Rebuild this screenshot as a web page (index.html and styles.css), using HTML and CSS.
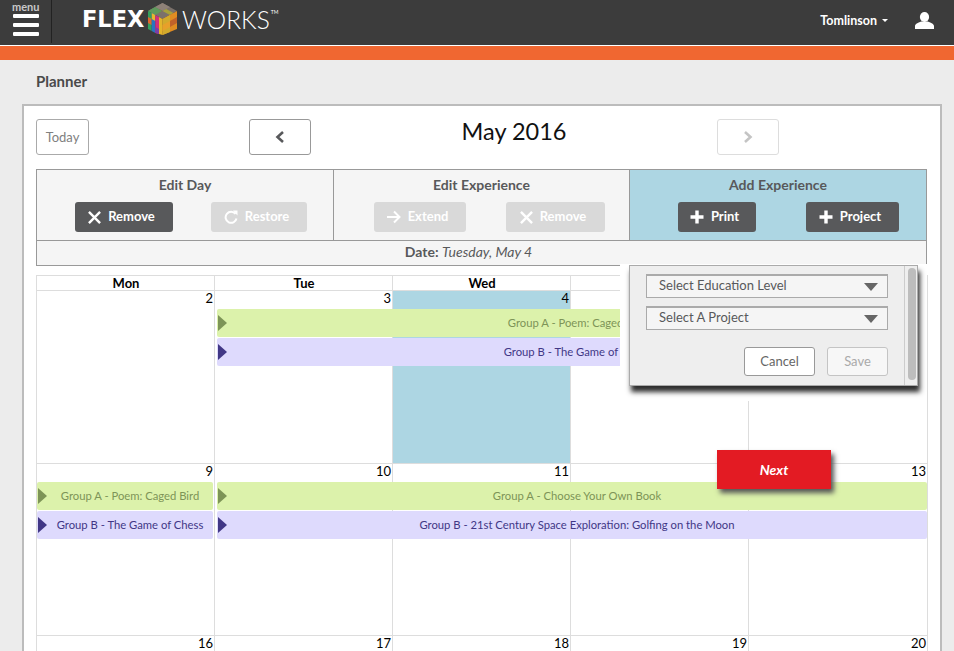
FILE: index.html
```html
<!DOCTYPE html>
<html>
  <head>
    <title>FlexWorks Planner</title>
    <link rel="stylesheet" href="styles.css">
  </head>
  <body>

    <header class="topbar">
      <div class="menu">
        <span class="menu-label">menu</span>
        <span class="menu-line"></span>
        <span class="menu-line"></span>
        <span class="menu-line"></span>
      </div>
      <div class="logo">
        <span class="logo-flex">FLEX</span>
        <svg class="cube" width="31" height="32" viewBox="0 0 31 32">
          <polygon points="15.5,0 30,8 15.5,16 1,8" fill="#7b716b"/>
          <polygon points="15.5,0 23,4 15.5,8 8,4" fill="#8f8178"/>
          <polygon points="11.7,6 15.5,8 11.7,10 8,8" fill="#b8453c"/>
          <polygon points="8,4 15.5,8 8,12 1,8" fill="#5f9a5c"/>
          <polygon points="19.2,6 26.5,10 23,12 15.5,8" fill="#a8a23a"/>
          <polygon points="1,8 4.7,10 4.7,28 1,26" fill="#35a05a"/>
          <polygon points="1,14 4.7,16 4.7,22 1,20" fill="#e2672c"/>
          <polygon points="4.7,10 8.3,12 8.3,30 4.7,28" fill="#2a75c0"/>
          <polygon points="4.7,10 8.3,12 8.3,18 4.7,16" fill="#e8b72e"/>
          <polygon points="8.3,12 12,14 12,31 8.3,30" fill="#d2307c"/>
          <polygon points="8.3,24 12,26 12,31 8.3,30" fill="#7b3fa8"/>
          <polygon points="12,14 15.5,16 15.5,32 12,31" fill="#e4b52a"/>
          <polygon points="15.5,16 30,8 30,26 15.5,32" fill="#e08c22"/>
          <polygon points="15.5,16 23,12 23,29 15.5,32" fill="#d2aa2c"/>
          <polygon points="23,18 30,14 30,20 23,24" fill="#c2622a"/>
          <polygon points="15.5,22 23,18 23,24 15.5,28" fill="#e8a02a"/>
        </svg>
        <span class="logo-works">WORKS</span>
        <span class="logo-tm">TM</span>
      </div>
      <div class="account">
        <span class="account-name">Tomlinson</span>
        <span class="caret"></span>
        <svg class="user" width="19" height="17" viewBox="0 0 19 17">
          <ellipse cx="9.5" cy="5" rx="4.6" ry="5" fill="#fff"/>
          <path d="M0 17 V14 C0 11.5 4 10.5 6 9.5 H13 C15 10.5 19 11.5 19 14 V17 Z" fill="#fff"/>
        </svg>
      </div>
    </header>
    <div class="stripe"></div>

    <main class="page">
      <h1 class="page-title">Planner</h1>

      <section class="card">
        <div class="month-nav">
          <button class="today">Today</button>
          <button class="arrow-btn">
            <svg width="10" height="12" viewBox="0 0 10 12"><path d="M8 1 L2.5 6 L8 11" fill="none" stroke="#58595b" stroke-width="2.6"/></svg>
          </button>
          <h2 class="month">May 2016</h2>
          <button class="arrow-btn off">
            <svg width="10" height="12" viewBox="0 0 10 12"><path d="M2 1 L7.5 6 L2 11" fill="none" stroke="#c4c4c4" stroke-width="2.6"/></svg>
          </button>
        </div>

        <div class="tools">
          <div class="tool-row">
            <div class="tool tool-day">
              <h3>Edit Day</h3>
              <div class="tool-btns">
                <button class="act w98">
                  <svg width="13" height="13" viewBox="0 0 14 14"><path d="M1 1 L13 13 M13 1 L1 13" stroke="#fff" stroke-width="2.6"/></svg>
                  <span>Remove</span>
                </button>
                <button class="act off w96">
                  <svg width="14" height="14" viewBox="0 0 14 14"><path d="M11.5 4 A5.5 5.5 0 1 0 12.5 8.5" fill="none" stroke="#fff" stroke-width="2"/><path d="M9 0.5 H13.5 V5.5 Z" fill="#fff"/></svg>
                  <span>Restore</span>
                </button>
              </div>
            </div>
            <div class="tool tool-exp">
              <h3>Edit Experience</h3>
              <div class="tool-btns">
                <button class="act off w92">
                  <svg width="14" height="14" viewBox="0 0 14 14"><path d="M0 7 H12 M7 1.5 L12.5 7 L7 12.5" fill="none" stroke="#fff" stroke-width="2"/></svg>
                  <span>Extend</span>
                </button>
                <button class="act off w99">
                  <svg width="13" height="13" viewBox="0 0 14 14"><path d="M1 1 L13 13 M13 1 L1 13" stroke="#fff" stroke-width="2.6"/></svg>
                  <span>Remove</span>
                </button>
              </div>
            </div>
            <div class="tool tool-add">
              <h3>Add Experience</h3>
              <div class="tool-btns">
                <button class="act w78">
                  <svg width="14" height="14" viewBox="0 0 14 14"><path d="M7 0.5 V13.5 M0.5 7 H13.5" stroke="#fff" stroke-width="3.4"/></svg>
                  <span>Print</span>
                </button>
                <button class="act w93">
                  <svg width="14" height="14" viewBox="0 0 14 14"><path d="M7 0.5 V13.5 M0.5 7 H13.5" stroke="#fff" stroke-width="3.4"/></svg>
                  <span>Project</span>
                </button>
              </div>
            </div>
          </div>
          <div class="date-row"><b>Date:</b> <i>Tuesday, May 4</i></div>
        </div>

        <div class="calendar">
          <div class="days">
            <div>Mon</div>
            <div>Tue</div>
            <div>Wed</div>
            <div></div>
            <div></div>
          </div>

          <div class="week week-first">
            <div class="cell c1">2</div>
            <div class="cell c2">3</div>
            <div class="cell c3 picked">4</div>
            <div class="cell c4"></div>
            <div class="cell c5"></div>
            <div class="bar green r1 from-tue"><span class="tri"></span><span class="bar-text">Group A - Poem: Caged Bird</span></div>
            <div class="bar purple r2 from-tue"><span class="tri"></span><span class="bar-text">Group B - The Game of Chess</span></div>
          </div>

          <div class="week">
            <div class="cell c1">9</div>
            <div class="cell c2">10</div>
            <div class="cell c3">11</div>
            <div class="cell c4"></div>
            <div class="cell c5">13</div>
            <div class="bar green r1 only-mon"><span class="tri"></span><span class="bar-text">Group A - Poem: Caged Bird</span></div>
            <div class="bar purple r2 only-mon"><span class="tri"></span><span class="bar-text">Group B - The Game of Chess</span></div>
            <div class="bar green r1 from-tue"><span class="tri"></span><span class="bar-text">Group A - Choose Your Own Book</span></div>
            <div class="bar purple r2 from-tue"><span class="tri"></span><span class="bar-text">Group B - 21st Century Space Exploration: Golfing on the Moon</span></div>
          </div>

          <div class="week">
            <div class="cell c1">16</div>
            <div class="cell c2">17</div>
            <div class="cell c3">18</div>
            <div class="cell c4">19</div>
            <div class="cell c5">20</div>
          </div>
        </div>

        <!-- the popup sits on a white patch that hides the calendar behind it -->
        <div class="popup-mask"></div>
        <div class="popup">
          <div class="popup-body">
            <div class="select">Select Education Level<span class="select-arrow"></span></div>
            <div class="select">Select A Project<span class="select-arrow"></span></div>
            <div class="popup-btns">
              <button class="pop-btn">Cancel</button>
              <button class="pop-btn off">Save</button>
            </div>
          </div>
          <div class="scroll"><div class="thumb"></div></div>
        </div>

        <button class="next">Next</button>
      </section>
    </main>

  </body>
</html>
```

FILE: styles.css
```css
*,
*:before,
*:after {
  box-sizing: border-box;
}
html,
body {
  margin: 0px;
  padding: 0px;
  height: 651px;
  overflow: hidden;
  background: #ececec;
  font-family: Lato, "Open Sans", sans-serif;
  color: #58595b;
}

button {
  font-family: inherit;
  padding: 0px;
}

/* top bar */
.topbar {
  display: flex;
  align-items: stretch;
  height: 46px;
  background: #3c3c3c;
  border-bottom: 1px solid #fff;
}
.menu {
  display: flex;
  flex-direction: column;
  align-items: center;
  width: 52px;
  margin-bottom: 2px;
  border-right: 1px solid #222;
}
.menu-label {
  width: 27px;
  margin-top: 1px;
  font-size: 11px;
  line-height: 11px;
  font-weight: bold;
  color: #c8c8c8;
  text-align: center;
}
.menu-line {
  width: 26px;
  height: 4px;
  margin-top: 2px;
  margin-bottom: 3px;
  border-radius: 1px;
  background: #fff;
}
.logo {
  display: flex;
  align-items: center;
  height: 38px;
  margin-left: 30px;
  color: #fff;
}
.logo-flex {
  width: 65px;
  font-family: "DejaVu Sans", sans-serif;
  font-size: 22.5px;
  font-weight: bold;
}
.logo-works {
  margin-left: 4px;
  font-size: 24.5px;
  font-weight: 300;
}
.logo-tm {
  align-self: flex-start;
  margin-top: 9px;
  margin-left: 1px;
  font-size: 5px;
}
.account {
  display: flex;
  align-items: center;
  margin-left: auto;
  padding-right: 20px;
  padding-bottom: 5px;
  color: #fff;
}
.account-name {
  font-size: 12.5px;
  font-weight: bold;
}
.caret {
  width: 0px;
  height: 0px;
  margin-left: 5px;
  border-top: 3px solid #fff;
  border-left: 3px solid transparent;
  border-right: 3px solid transparent;
}
.user {
  margin-left: 27px;
}
.stripe {
  height: 14px;
  background: #f06731;
}

/* page */
.page {
  padding: 0px 12px 0px 22px;
}
.page-title {
  height: 44px;
  margin: 0px;
  padding-top: 13px;
  padding-left: 14px;
  font-size: 15px;
  line-height: 16px;
  font-weight: bold;
  color: #4a4a4a;
}
.card {
  position: relative;
  height: 560px;
  padding: 13px 0px 0px 12px;
  background: #fff;
  border: 2px solid #bcbcbc;
}

.month-nav {
  display: flex;
  align-items: flex-start;
  height: 50px;
}
.today {
  width: 53px;
  height: 36px;
  margin-right: 160px;
  background: #fff;
  border: 1px solid #aaa;
  border-radius: 3px;
  font-size: 13px;
  color: #808080;
}
.arrow-btn {
  display: flex;
  align-items: center;
  justify-content: center;
  width: 62px;
  height: 36px;
  background: #fff;
  border: 1px solid #999;
  border-radius: 3px;
}
.arrow-btn.off {
  border-color: #ddd;
}
.month {
  width: 406px;
  margin: 0px;
  font-size: 23.5px;
  line-height: 24px;
  font-weight: normal;
  color: #111;
  text-align: center;
}

/* tool panels */
.tools {
  width: 891px;
  height: 97px;
  border: 1px solid #999;
}
.tool-row {
  display: flex;
  height: 71px;
  border-bottom: 1px solid #999;
}
.tool {
  width: 296px;
  background: #f5f5f5;
  border-right: 1px solid #999;
}
.tool h3 {
  height: 32px;
  margin: 0px;
  padding-top: 7px;
  font-size: 14px;
  line-height: 16px;
  font-weight: bold;
  text-align: center;
}
.tool-day {
  width: 297px;
}
.tool-add {
  border-right: 0px;
  background: #add6e3;
}
.tool-btns {
  display: flex;
}
.tool-day .tool-btns {
  gap: 38px;
  padding-left: 38px;
}
.tool-exp .tool-btns {
  gap: 40px;
  padding-left: 40px;
}
.tool-add .tool-btns {
  gap: 50px;
  padding-left: 48px;
}
.act {
  display: flex;
  align-items: center;
  justify-content: center;
  gap: 7px;
  height: 30px;
  padding-right: 5px;
  background: #58595b;
  border: 0px;
  border-radius: 3px;
  font-size: 13px;
  font-weight: bold;
  color: #fff;
}
.act span {
  margin-bottom: 2px;
}
.act.off {
  background: #d9d9d9;
}
.w98 { width: 98px; }
.w96 { width: 96px; }
.w92 { width: 92px; }
.w99 { width: 99px; }
.w78 { width: 78px; }
.w93 { width: 93px; }

.date-row {
  height: 24px;
  padding-right: 26px;
  background: #f5f5f5;
  font-size: 14px;
  line-height: 22px;
  text-align: center;
}

/* calendar */
.calendar {
  width: 892px;
  margin-top: 9px;
  border-right: 1px solid #ddd;
}
.days {
  display: grid;
  grid-template-columns: repeat(4, 178px) 179px;
  height: 16px;
  border-top: 1px solid #ddd;
  border-bottom: 1px solid #ddd;
}
.days div {
  padding-left: 1px;
  border-left: 1px solid #ddd;
  font-size: 13px;
  line-height: 14px;
  font-weight: bold;
  color: #000;
  text-align: center;
}
.week {
  display: grid;
  grid-template-columns: repeat(4, 178px) 179px;
  grid-template-rows: 17px 28px 28px 1fr;
  row-gap: 1px;
  height: 172px;
  border-bottom: 1px solid #ddd;
}
.week-first {
  height: 173px;
}
.cell {
  grid-row: 1 / -1;
  padding-right: 1px;
  border-left: 1px solid #ddd;
  font-size: 13px;
  line-height: 14px;
  color: #000;
  text-align: right;
}
.c1 { grid-column: 1; }
.c2 { grid-column: 2; }
.c3 { grid-column: 3; }
.c4 { grid-column: 4; }
.c5 { grid-column: 5; }
.picked {
  background: #add6e3;
}
.bar {
  display: flex;
  align-items: center;
  border-radius: 2px;
  font-size: 11.25px;
}
.r1 { grid-row: 2; }
.r2 { grid-row: 3; }
.from-tue {
  grid-column: 2 / 6;
  margin-left: 3px;
}
.only-mon {
  grid-column: 1;
  margin-left: 1px;
  margin-right: 1px;
}
.green {
  background: #dcf2ab;
  color: #7d9457;
}
.purple {
  background: #dedafd;
  color: #413786;
}
.tri {
  width: 0px;
  height: 0px;
  margin-left: 1px;
  border-left: 9px solid #7d9457;
  border-top: 8px solid transparent;
  border-bottom: 8px solid transparent;
}
.purple .tri {
  border-left-color: #413786;
}
.bar-text {
  flex: 1;
  padding-bottom: 2px;
  text-align: center;
}

/* popup over the calendar */
.popup-mask {
  position: absolute;
  left: 596px;
  top: 158px;
  width: 307px;
  height: 137px;
  background: #fff;
}
.popup {
  position: absolute;
  left: 605px;
  top: 159px;
  display: flex;
  width: 289px;
  height: 121px;
  background: #eeeeee;
  border: 1px solid #aaa;
  box-shadow: 2px 6px 5px #2e2e2e;
}
.popup-body {
  width: 275px;
  padding: 8px 16px 0px 16px;
  border-right: 1px solid #ccc;
}
.select {
  display: flex;
  align-items: center;
  justify-content: space-between;
  height: 24px;
  margin-bottom: 8px;
  padding: 0px 9px 3px 12px;
  background: #f5f5f5;
  border: 1px solid #aaa;
  border-top-width: 2px;
  font-size: 13px;
}
.select-arrow {
  width: 0px;
  height: 0px;
  margin-top: 3px;
  border-top: 8px solid #666;
  border-left: 7.5px solid transparent;
  border-right: 7.5px solid transparent;
}
.popup-btns {
  display: flex;
  justify-content: flex-end;
  gap: 12px;
  margin-top: 17px;
}
.pop-btn {
  width: 71px;
  height: 29px;
  padding-bottom: 2px;
  background: #fff;
  border: 1px solid #999;
  border-radius: 3px;
  font-size: 13px;
  color: #666;
}
.pop-btn.off {
  width: 61px;
  border-color: #c4c4c4;
  background: #f7f7f7;
  color: #aaa;
}
.scroll {
  flex: 1;
  padding: 2px 0px 0px 3px;
}
.thumb {
  width: 8px;
  height: 112px;
  border-radius: 4px;
  background: #bdbdbd;
}

.next {
  position: absolute;
  left: 693px;
  top: 344px;
  width: 114px;
  height: 39px;
  background: #e31b23;
  border: 0px;
  box-shadow: 3px 4px 5px #555;
  font-size: 14px;
  font-weight: bold;
  font-style: italic;
  color: #fff;
}
```
